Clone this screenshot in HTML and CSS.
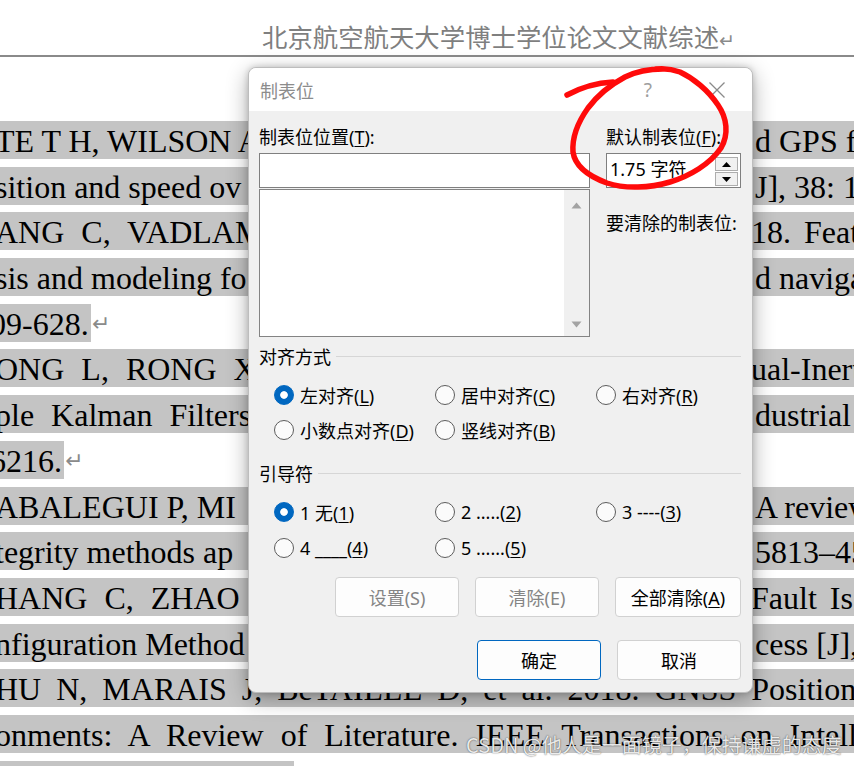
FILE: index.html
```html
<!DOCTYPE html>
<html lang="zh-CN">
<head>
<meta charset="utf-8">
<title>制表位</title>
<link rel="stylesheet" href="styles.css">
</head>
<body>
<div class="page">
  <header class="doc-head"><span class="head-text">北京航空航天大学博士学位论文文献综述</span><span class="ret">↵</span></header>
  <div class="rule"></div>
  <div class="doc">
    <div class="ln band"><span class="l">TE T H, WILSON A</span><span class="r">d GPS for</span></div>
    <div class="ln band"><span class="l">sition and speed ov</span><span class="r">J], 38: 1</span></div>
    <div class="ln band wide"><span class="l">ANG C, VADLAM</span><span class="r r-tight">18. Feat</span></div>
    <div class="ln band"><span class="l">sis and modeling fo</span><span class="r">d naviga</span></div>
    <div class="ln"><span class="l"><span class="hl">09-628.</span><span class="ret2">↵</span></span></div>
    <div class="ln band wide"><span class="l">ONG L, RONG X</span><span class="r r-tight">ual-Inert</span></div>
    <div class="ln band wide"><span class="l">ple Kalman Filters</span><span class="r">dustrial</span></div>
    <div class="ln"><span class="l"><span class="hl">6216.</span><span class="ret2">↵</span></span></div>
    <div class="ln band"><span class="l">ABALEGUI P, MI</span><span class="r">A review</span></div>
    <div class="ln band"><span class="l">tegrity methods ap</span><span class="r">5813–45</span></div>
    <div class="ln band wide"><span class="l">HANG C, ZHAO</span><span class="r r-tight">Fault Is</span></div>
    <div class="ln band"><span class="l">nfiguration Method</span><span class="r">cess [J],</span></div>
    <div class="ln band full"><span class="l">HU N, MARAIS J, BeTAILLE D, et al. 2018. GNSS Position</span></div>
    <div class="ln band full full-2"><span class="l">onments: A Review of Literature. IEEE Transactions on Intelli</span></div>
    <div class="ln"><span class="l"><span class="hl tail"></span></span></div>
  </div>

  <div class="dialog">
    <div class="titlebar">
      <span class="title">制表位</span>
      <span class="help">?</span>
      <svg class="close" width="16" height="16" viewBox="0 0 16 16"><path d="M0.5 0.5L15.5 15.5M15.5 0.5L0.5 15.5" stroke="#8a8a8a" stroke-width="1.3" fill="none"/></svg>
    </div>
    <div class="body">
      <div class="top">
        <div class="col-left">
          <div class="lbl">制表位位置(<u>T</u>):</div>
          <div class="edit"></div>
          <div class="list">
            <div class="sb">
              <svg width="11" height="7" viewBox="0 0 11 7"><path d="M5.5 0.5L10.5 6.5H0.5Z" fill="#a3a3a3"/></svg>
              <svg width="11" height="7" viewBox="0 0 11 7"><path d="M0.5 0.5H10.5L5.5 6.5Z" fill="#a3a3a3"/></svg>
            </div>
          </div>
        </div>
        <div class="col-right">
          <div class="lbl">默认制表位(<u>F</u>):</div>
          <div class="spin">
            <div class="spin-val">1.75 字符</div>
            <div class="spin-btns">
              <div class="spin-btn"><svg width="9" height="5" viewBox="0 0 9 5"><path d="M4.5 0L9 5H0Z" fill="#000"/></svg></div>
              <div class="spin-btn"><svg width="9" height="5" viewBox="0 0 9 5"><path d="M0 0H9L4.5 5Z" fill="#000"/></svg></div>
            </div>
          </div>
          <div class="lbl lbl-clear">要清除的制表位:</div>
        </div>
      </div>

      <div class="legend legend-align"><span>对齐方式</span></div>
      <div class="radios">
        <div class="radio"><span class="dot on"></span><span>左对齐(<u>L</u>)</span></div>
        <div class="radio"><span class="dot"></span><span>居中对齐(<u>C</u>)</span></div>
        <div class="radio"><span class="dot"></span><span>右对齐(<u>R</u>)</span></div>
        <div class="radio"><span class="dot"></span><span>小数点对齐(<u>D</u>)</span></div>
        <div class="radio"><span class="dot"></span><span>竖线对齐(<u>B</u>)</span></div>
      </div>

      <div class="legend legend-lead"><span>引导符</span></div>
      <div class="radios radios-lead">
        <div class="radio"><span class="dot on"></span><span>1 无(<u>1</u>)</span></div>
        <div class="radio"><span class="dot"></span><span>2 .....(<u>2</u>)</span></div>
        <div class="radio"><span class="dot"></span><span>3 ----(<u>3</u>)</span></div>
        <div class="radio"><span class="dot"></span><span>4 ____(<u>4</u>)</span></div>
        <div class="radio"><span class="dot"></span><span>5 ......(<u>5</u>)</span></div>
      </div>

      <div class="btnrow btnrow-1">
        <div class="btn dis"><span>设置(S)</span></div>
        <div class="btn dis"><span>清除(E)</span></div>
        <div class="btn wide-btn"><span>全部清除(<u>A</u>)</span></div>
      </div>
      <div class="btnrow btnrow-2">
        <div class="btn primary"><span>确定</span></div>
        <div class="btn"><span>取消</span></div>
      </div>
    </div>
  </div>

  <svg class="ink" width="854" height="766" viewBox="0 0 854 766">
    <path d="M567 95 C578 89 595 83 613 82" />
    <path d="M663 69 C650 69 637 71 625 77 C610 85 597 96 588 108 C578 122 572 138 573 152 C575 166 588 176 607 183 C625 189 650 188 670 182 C690 176 710 164 721 148 C729 134 727 118 718 105 C708 90 693 78 680 72 C672 69 665 68 656 69" />
  </svg>

  <div class="wm">CSDN @他人是一面镜子，保持谦虚的态度</div>
</div>
</body>
</html>
```

FILE: styles.css
```css
html, body {
  margin: 0;
  padding: 0;
  background: #fff;
}
.page {
  position: relative;
  width: 854px;
  height: 766px;
  overflow: hidden;
  background: #fff;
}

/* document */
.doc-head {
  height: 55px;
  box-sizing: border-box;
  padding: 21px 0 0 262px;
  font-family: "Noto Sans CJK SC", sans-serif;
  font-size: 25.4px;
  line-height: 30px;
  color: #7f7f7f;
  white-space: nowrap;
}
.doc-head .ret {
  font-family: "DejaVu Sans", sans-serif;
  font-size: 19px;
  color: #8a8a8a;
}
.rule {
  height: 2px;
  background: #8a8a8a;
}
.doc {
  margin-top: 64px;
  font-family: "Liberation Serif", serif;
  font-size: 32px;
  color: #000;
}
.ln {
  display: grid;
  grid-template-columns: 753px 1fr;
  height: 38px;
  margin-bottom: 7.7px;
  line-height: 36px;
  white-space: nowrap;
  overflow: hidden;
}
.band {
  background: #c4c4c4;
}
.ln .l {
  overflow: hidden;
  text-indent: -5px;
  padding-top: 2px;
}
.ln .r {
  padding-top: 2px;
  padding-left: 2px;
}
.ln .r-tight {
  margin-left: -4px;
  word-spacing: 5px;
}
.wide {
  word-spacing: 9px;
}
.full {
  display: block;
  word-spacing: 7px;
}
.full-2 {
  word-spacing: 9px;
}
.full .l {
  display: block;
  overflow: visible;
}
.hl {
  display: inline-block;
  background: #c4c4c4;
  height: 38px;
  margin-top: -2px;
  padding-top: 2px;
  padding-right: 2px;
  box-sizing: border-box;
  vertical-align: top;
}
.hl.tail {
  width: 294px;
  margin-left: 5px;
}
.ret2 {
  font-family: "DejaVu Sans", sans-serif;
  font-size: 22px;
  color: #8a8a8a;
  vertical-align: top;
  text-indent: 0;
  display: inline-block;
  margin-left: 1px;
  line-height: 36px;
}

/* dialog */
.dialog {
  position: absolute;
  left: 248px;
  top: 67px;
  width: 505px;
  height: 626px;
  box-sizing: border-box;
  border: 1px solid #bdbdbd;
  border-radius: 8px;
  background: #f0f0f0;
  box-shadow: 0 6px 22px rgba(0, 0, 0, 0.32), 0 0 6px rgba(0, 0, 0, 0.18);
  overflow: hidden;
  font-family: "Noto Sans", "Noto Sans CJK SC", sans-serif;
  font-size: 18px;
  color: #000;
}
.titlebar {
  height: 43px;
  background: #fff;
  display: flex;
  align-items: center;
  padding: 0 27px 0 11px;
}
.title {
  flex: 1;
  color: #8c8c8c;
  font-family: "Noto Sans CJK SC", sans-serif;
}
.help {
  color: #9e9e9e;
  font-size: 19px;
  margin-right: 57px;
}
.close {
  display: block;
}
.body {
  padding: 14px 11px 0 10px;
}
.top {
  display: flex;
  gap: 16px;
}
.col-left {
  width: 331px;
}
.col-right {
  width: 135px;
}
.lbl {
  height: 24px;
  line-height: 24px;
  white-space: nowrap;
}
.lbl-clear {
  margin-top: 23px;
}
.edit {
  margin-top: 4px;
  height: 35px;
  box-sizing: border-box;
  border: 1px solid #7f7f7f;
  background: #fff;
}
.list {
  margin-top: 1px;
  height: 148px;
  box-sizing: border-box;
  border: 1px solid #838383;
  background: #fff;
  display: flex;
  justify-content: flex-end;
}
.sb {
  width: 25px;
  background: #f0f0f0;
  display: flex;
  flex-direction: column;
  justify-content: space-between;
  align-items: center;
  padding: 12px 0 8px;
  box-sizing: border-box;
}
.sb svg {
  display: block;
}
.spin {
  margin-top: 4px;
  height: 35px;
  box-sizing: border-box;
  border: 1px solid #7f7f7f;
  background: #fff;
  display: flex;
}
.spin-val {
  flex: 1;
  padding-left: 3px;
  line-height: 31px;
  white-space: nowrap;
}
.spin-btns {
  width: 23px;
  display: flex;
  flex-direction: column;
  gap: 1px;
  padding: 3px 2px 1px 0;
}
.spin-btn {
  flex: 1;
  background: #f1f1f1;
  border: 1px solid #adadad;
  display: flex;
  align-items: center;
  justify-content: center;
}
.spin-btn svg {
  display: block;
}
.legend {
  display: flex;
  align-items: center;
  height: 24px;
  line-height: 24px;
  white-space: nowrap;
  font-family: "Noto Sans CJK SC", sans-serif;
}
.legend::after {
  content: "";
  flex: 1;
  height: 1px;
  background: #d6d6d6;
  margin-left: 5px;
}
.legend-align {
  margin-top: 7px;
}
.legend-lead {
  margin-top: 19px;
}
.radios {
  display: grid;
  grid-template-columns: repeat(3, 161px);
  row-gap: 11px;
  padding-left: 15px;
  margin-top: 15px;
}
.radios-lead {
  row-gap: 12px;
}
.radio {
  display: flex;
  align-items: center;
  gap: 6px;
  height: 24px;
  white-space: nowrap;
}
.dot {
  width: 20px;
  height: 20px;
  flex: none;
  box-sizing: border-box;
  border-radius: 50%;
  border: 1px solid #5c5c5c;
  background: #fbfbfb;
}
.dot.on {
  border-color: #0067c0;
  background: radial-gradient(circle, #fff 0 3.4px, #0067c0 4.2px);
}
u {
  text-decoration-thickness: 1px;
  text-underline-offset: 2px;
}
.btnrow {
  display: flex;
  justify-content: flex-end;
  gap: 16px;
}
.btnrow-1 {
  margin-top: 17px;
}
.btnrow-2 {
  margin-top: 23px;
}
.btn {
  width: 124px;
  height: 40px;
  box-sizing: border-box;
  border: 1px solid #d1d1d1;
  border-radius: 4px;
  background: #fdfdfd;
  display: flex;
  align-items: center;
  justify-content: center;
  white-space: nowrap;
}
.btn.wide-btn {
  width: 126px;
}
.btn.dis {
  color: #858585;
}
.btn.primary {
  border-color: #0067c0;
}

/* red annotation */
.ink {
  position: absolute;
  left: 0;
  top: 0;
  pointer-events: none;
}
.ink path {
  fill: none;
  stroke: #ff0a0a;
  stroke-width: 5.5;
  stroke-linecap: round;
  stroke-linejoin: round;
}

/* watermark */
.wm {
  position: absolute;
  left: 466px;
  top: 732px;
  font-family: "Noto Sans CJK SC", sans-serif;
  font-size: 20px;
  line-height: 26px;
  color: rgba(255, 255, 255, 0.88);
  text-shadow: 0 0 1px rgba(0, 0, 0, 0.55), 0 0 2px rgba(0, 0, 0, 0.3);
  white-space: nowrap;
}
```
